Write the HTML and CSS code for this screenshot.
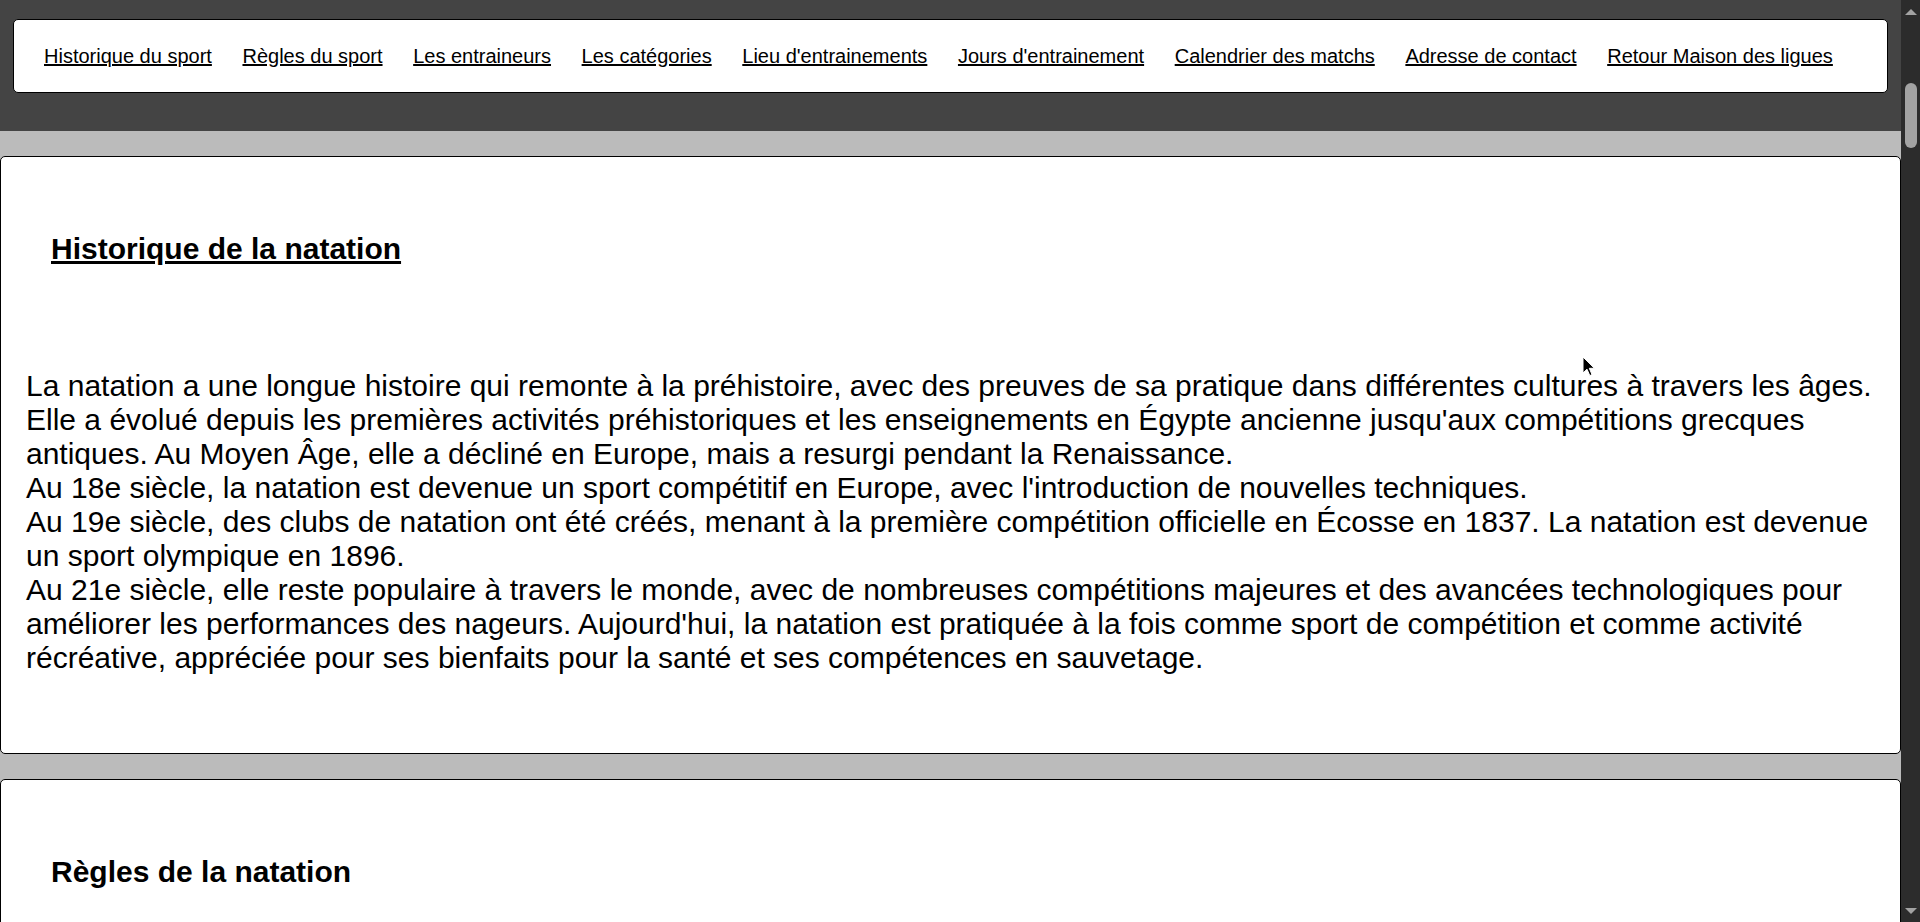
FILE: index.html
```html
<!DOCTYPE html>
<html lang="fr">
<head>
<meta charset="utf-8">
<title>Natation</title>
<link rel="stylesheet" href="styles.css">
</head>
<body>
<div class="frame">
  <div class="page">
    <header class="top">
      <nav class="menu">
        <a href="#historique">Historique du sport</a>
        <a href="#regles">Règles du sport</a>
        <a href="#entraineurs">Les entraineurs</a>
        <a href="#categories">Les catégories</a>
        <a href="#lieu">Lieu d'entrainements</a>
        <a href="#jours">Jours d'entrainement</a>
        <a href="#calendrier">Calendrier des matchs</a>
        <a href="#contact">Adresse de contact</a>
        <a href="#retour">Retour Maison des ligues</a>
      </nav>
    </header>
    <main class="content">
      <section class="card" id="historique">
        <h2 class="card-title underlined">Historique de la natation</h2>
        <p class="card-text">La natation a une longue histoire qui remonte à la préhistoire, avec des preuves de sa pratique dans différentes cultures à travers les âges. Elle a évolué depuis les premières activités préhistoriques et les enseignements en Égypte ancienne jusqu'aux compétitions grecques antiques. Au Moyen Âge, elle a décliné en Europe, mais a resurgi pendant la Renaissance.<br>Au 18e siècle, la natation est devenue un sport compétitif en Europe, avec l'introduction de nouvelles techniques.<br>Au 19e siècle, des clubs de natation ont été créés, menant à la première compétition officielle en Écosse en 1837. La natation est devenue un sport olympique en 1896.<br>Au 21e siècle, elle reste populaire à travers le monde, avec de nombreuses compétitions majeures et des avancées technologiques pour améliorer les performances des nageurs. Aujourd'hui, la natation est pratiquée à la fois comme sport de compétition et comme activité récréative, appréciée pour ses bienfaits pour la santé et ses compétences en sauvetage.</p>
      </section>
      <section class="card" id="regles">
        <h2 class="card-title">Règles de la natation</h2>
        <p class="card-text">&nbsp;</p>
      </section>
    </main>
    <svg class="cursor" width="14" height="22" viewBox="0 0 14 22" aria-hidden="true">
      <path d="M1 1 L1 17 L5 13.2 L7.8 19.6 L10 18.6 L7.3 12.3 L12.4 12.3 Z" fill="#000" stroke="#fff" stroke-width="1"/>
    </svg>
  </div>
  <div class="scrollbar" aria-hidden="true">
    <span class="arrow-up"></span>
    <span class="thumb"></span>
    <span class="spacer"></span>
    <span class="arrow-down"></span>
  </div>
</div>
</body>
</html>
```
FILE: styles.css
```css
html, body {
  margin: 0;
  padding: 0;
  height: 922px;
  overflow: hidden;
}

body {
  font-family: "Liberation Sans", Arial, sans-serif;
  color: #000;
  background: #bbbbbb;
}

.frame {
  display: flex;
  height: 922px;
}

.page {
  position: relative;
  flex: 1;
  min-width: 0;
  overflow: hidden;
  background: #bbbbbb;
}

.top {
  background: #444444;
  padding: 19px 13px 38px 13px;
}

.menu {
  display: flex;
  gap: 30.6px;
  background: #fff;
  border: 1px solid #000;
  border-radius: 5px;
  padding: 24.5px 30px;
  font-size: 20px;
  line-height: 23px;
}

.menu a {
  color: #000;
  text-decoration: underline;
  white-space: nowrap;
}

.content {
  display: flex;
  flex-direction: column;
  gap: 25px;
  padding-top: 25px;
}

.card {
  background: #fff;
  border: 1px solid #000;
  border-radius: 5px;
  padding: 75px 10px 78px 25px;
}

.card-title {
  margin: 0 0 0 25px;
  font-size: 30px;
  font-weight: bold;
  line-height: 34.5px;
}

.underlined {
  text-decoration: underline;
}

.card-text {
  margin: 102px 0 0 0;
  font-size: 30px;
  line-height: 34px;
}

.cursor {
  position: absolute;
  left: 1582px;
  top: 356px;
}

.scrollbar {
  width: 19px;
  flex: 0 0 19px;
  background: #2c2c2c;
  display: flex;
  flex-direction: column;
  align-items: center;
  padding: 9px 0 8px 0;
  box-sizing: border-box;
}

.arrow-up {
  width: 0;
  height: 0;
  border-left: 6px solid transparent;
  border-right: 6px solid transparent;
  border-bottom: 6px solid #a3a3a3;
}

.thumb {
  width: 12px;
  height: 65px;
  margin-top: 68px;
  border-radius: 6px;
  background: #a3a3a3;
}

.spacer {
  flex: 1;
}

.arrow-down {
  width: 0;
  height: 0;
  border-left: 6px solid transparent;
  border-right: 6px solid transparent;
  border-top: 6px solid #a3a3a3;
}
```
